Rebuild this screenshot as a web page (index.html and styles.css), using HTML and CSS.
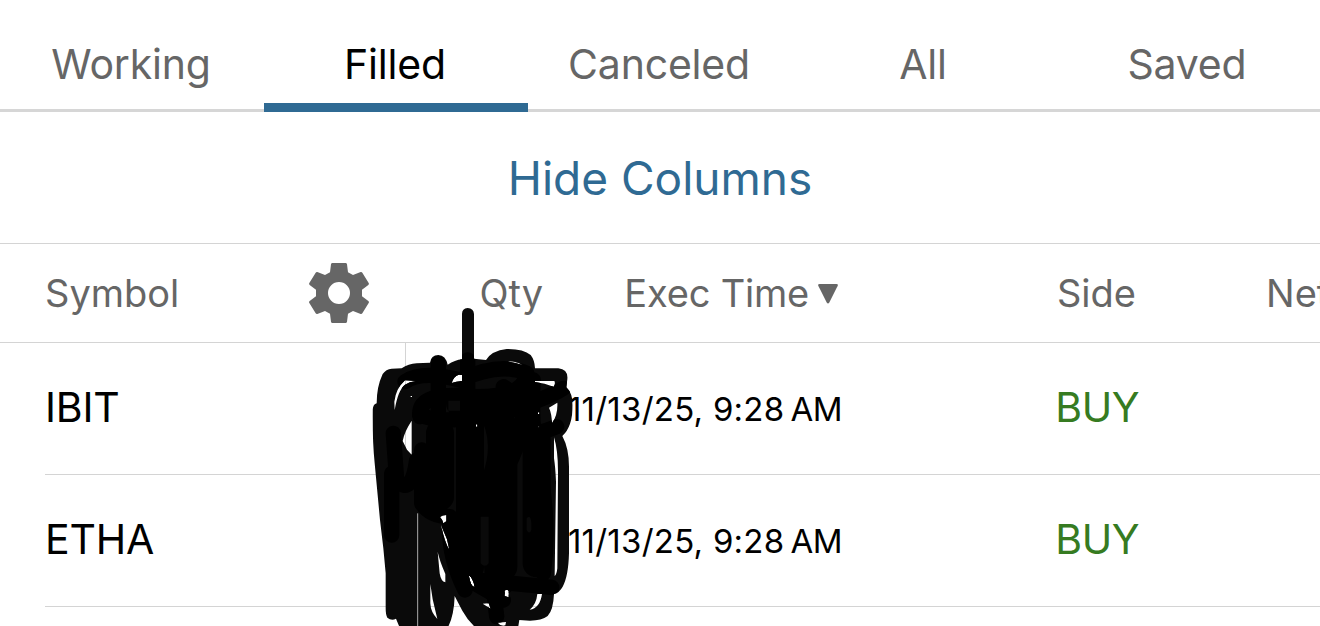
FILE: index.html
```html
<!DOCTYPE html>
<html lang="en">
<head>
  <meta charset="UTF-8" />
  <meta name="viewport" content="width=device-width, initial-scale=1" />
  <title>Orders</title>
  <link rel="stylesheet" href="styles.css">
</head>
<body>

<nav class="tabs">
  <a class="tab">Working</a>
  <a class="tab active">Filled</a>
  <a class="tab">Canceled</a>
  <a class="tab">All</a>
  <a class="tab">Saved</a>
</nav>

<div class="toggle">
  <a class="toggle-link">Hide Columns</a>
</div>

<div class="orders">
  <div class="row head">
    <div class="cell symbol">
      <span>Symbol</span>
      <svg class="gear" viewBox="0 0 180 180">
        <path fill-rule="evenodd" d="M70 0H110Q113 0 114 4L117 28L132 36L155 27Q158 26 160 29L179 60Q181 63 178 66L159 80V100L178 114Q181 117 179 120L160 151Q158 154 155 153L132 144L117 152L114 176Q113 180 110 180H70Q67 180 66 176L63 152L48 144L25 153Q22 154 20 151L1 120Q-1 117 2 114L21 100V80L2 66Q-1 63 1 60L20 29Q22 26 25 27L48 36L63 28L66 4Q67 0 70 0ZM90 57A33 33 0 1 0 90 123A33 33 0 1 0 90 57Z"/>
      </svg>
    </div>
    <div class="cell qty">Qty</div>
    <div class="cell time">Exec Time
      <svg class="arrow" viewBox="0 0 20 20"><path d="M1.5 0H18.5Q20.5 0 19.6 2L11.3 18.5Q10 20.5 8.7 18.5L.4 2Q-.5 0 1.5 0Z"/></svg>
    </div>
    <div class="cell side">Side</div>
    <div class="cell net">Net</div>
  </div>

  <div class="row">
    <div class="cell symbol">IBIT</div>
    <div class="cell qty"></div>
    <div class="cell time">11/13/25, 9:28<span class="ampm">AM</span></div>
    <div class="cell side buy">BUY</div>
  </div>
  <div class="row">
    <div class="cell symbol">ETHA</div>
    <div class="cell qty"></div>
    <div class="cell time">11/13/25, 9:28<span class="ampm">AM</span></div>
    <div class="cell side buy">BUY</div>
  </div>

  <!-- marker scribble over the quantities -->
  <svg class="scribble" viewBox="0 0 690 978">
    <defs>
      <clipPath id="ink">
        <path clip-rule="evenodd" d="M38 328Q40 312 50 310Q50 260 68 222Q78 207 95 206L125 205Q145 192 170 190L210 188Q213 165 235 165Q257 166 263 194Q285 180 306 178V42Q306 25 323 24Q341 25 342 42V176L378 180Q395 152 440 147Q490 146 512 165Q524 180 525 205H595Q625 208 622 238L619 262Q638 280 638 315Q638 380 607 408Q627 445 627 500V760Q625 830 608 860Q598 878 582 882Q580 930 563 948Q545 962 510 962L478 960L473 990H355Q325 965 307 932L284 888Q282 950 262 985H120L108 956Q95 964 82 953Q77 945 77 925V820L70 745L60 660L44 490Q37 420 38 328Z
          M168 243L135 241Q108 265 103 305L104 330Q114 270 135 254Q148 245 168 243Z
          M155 362Q133 395 128 423L141 449L155 464Z
          M275 249Q281 228 297 224L306 225V243Q288 244 275 249Z
          M443 184Q468 183 488 195Q465 187 443 184Z
          M525 243H583Q587 251 581 260Q555 249 525 246Z
          M592 308Q594 345 576 370Q575 340 567 323Z
          M582 412Q594 450 594 515L592 805Q590 824 584 828L588 545Q586 500 582 475Z
          M240 651Q247 645 259 645V664L250 670Q247 658 240 651Z
          M243 675L261 718L268 749Q255 731 243 675Z
          M233 755Q238 780 256 822V847Q243 845 239 820Z
          M211 852L218 898L232 957Q212 937 211 910Z
          M326 826Q339 832 344 862Q332 861 326 826Z
          M434 872Q440 867 446 872V892L434 888Z
          M368 911L386 910L392 926Z
          M532 882H546Q540 925 509 929Q529 913 532 882Z
          M412 968L438 966L436 976Q424 980 412 968Z
          M152 288H156V291H152Z M348 373H352V380H348Z M534 337H538V342H534Z M535 378H538V383H535Z"/>
      </clipPath>
    </defs>
    <g clip-path="url(#ink)">
      <rect class="wash" width="690" height="978"/>
      <g class="strokes">
        <path class="wide" d="M300 310H500M240 400V590M330 380V800M430 380V800M530 420V790"/>
        <path d="M235 190V390Q210 460 225 620"/>
        <path d="M135 245Q185 210 300 240Q420 185 500 220Q495 290 350 290Q170 270 180 350"/>
        <path d="M323 180V600Q300 720 345 850L430 900"/>
        <path d="M180 345Q260 380 440 330Q555 300 610 265"/>
        <path d="M375 330Q430 420 390 530Q380 690 410 950"/>
        <path d="M430 260L490 300Q490 430 430 520Q460 700 435 860"/>
        <path d="M520 240Q510 390 540 510Q570 680 550 820"/>
        <path d="M100 400L110 540Q155 590 170 480M95 520V705"/>
        <path d="M185 450V610Q210 650 270 650Q260 760 315 870"/>
        <path d="M340 840Q460 850 575 862M410 420Q520 410 590 380"/>
      </g>
      <path class="wash" d="M265 302H300V332H265ZM362 650H386V790Q375 805 362 790ZM500 655Q512 640 514 670V690Q508 705 500 690Z"/>
      <path class="gap" d="M173 640V978"/>
    </g>
  </svg>
</div>

</body>
</html>
```
FILE: styles.css
```css
* {
  box-sizing: border-box;
}
body {
  margin: 0;
  height: 626px;
  overflow: hidden;
  background: #fff;
  color: #000;
  font-family: Inter, "Liberation Sans", sans-serif;
}
.tabs {
  display: flex;
  height: 112px;
  border-bottom: 3px solid #d6d6d6;
}
.tab {
  flex: 0 0 20%;
  height: 112px;
  padding-top: 18px;
  padding-right: 2px;
  line-height: 92px;
  text-align: center;
  font-size: 41px;
  letter-spacing: -0.2px;
  color: #666;
}
.tab.active {
  color: #000;
  border-bottom: 9px solid #2f6a93;
}
.toggle {
  display: flex;
  justify-content: center;
  align-items: center;
  height: 132px;
  border-bottom: 1px solid #d4d4d4;
}
.toggle-link {
  font-size: 46px;
  color: #2f6a93;
}
.orders {
  position: relative;
  height: 382px;
}
.row {
  display: grid;
  grid-template-columns: 361px 137px 299px 297px 1fr;
  height: 132px;
  margin-left: 45px;
  border-bottom: 1px solid #d4d4d4;
  font-size: 41px;
}
.cell {
  display: flex;
  align-items: center;
  justify-content: flex-end;
  padding-bottom: 3px;
  white-space: nowrap;
}
.cell.symbol {
  justify-content: space-between;
  border-right: 1px solid #d4d4d4;
  letter-spacing: -0.2px;
}
.row .time {
  padding-bottom: 0;
  font-size: 33px;
  letter-spacing: 0.25px;
}
.ampm {
  margin-left: 6px;
  letter-spacing: -0.5px;
}
.buy {
  letter-spacing: -0.5px;
  color: #367b21;
}
.row.head {
  height: 99px;
  margin-left: 0;
  padding-left: 45px;
  font-size: 38px;
  color: #666;
}
.head .cell {
  padding-bottom: 0;
}
.head .symbol {
  border-right: none;
  padding-right: 37px;
  letter-spacing: normal;
}
.head .time {
  font-size: 38px;
  letter-spacing: -0.2px;
  padding-right: 4px;
}
.head .side {
  padding-right: 3px;
}
.head .net {
  justify-content: flex-start;
  padding-left: 127px;
  overflow: hidden;
}
.gear {
  width: 60px;
  height: 60px;
  fill: #666;
}
.arrow {
  width: 20px;
  height: 20px;
  margin-top: 2px;
  margin-left: 9px;
  fill: #666;
}
.scribble {
  position: absolute;
  left: 360px;
  top: 56px;
  width: 230px;
  height: 326px;
}
.wash {
  fill: #0a0a0a;
}
.strokes {
  fill: none;
  stroke: #000;
  stroke-width: 46;
  stroke-linecap: round;
  stroke-linejoin: round;
}
.wide {
  stroke-width: 84;
}
.gap {
  stroke: #aaa;
  stroke-width: 3;
}
```
